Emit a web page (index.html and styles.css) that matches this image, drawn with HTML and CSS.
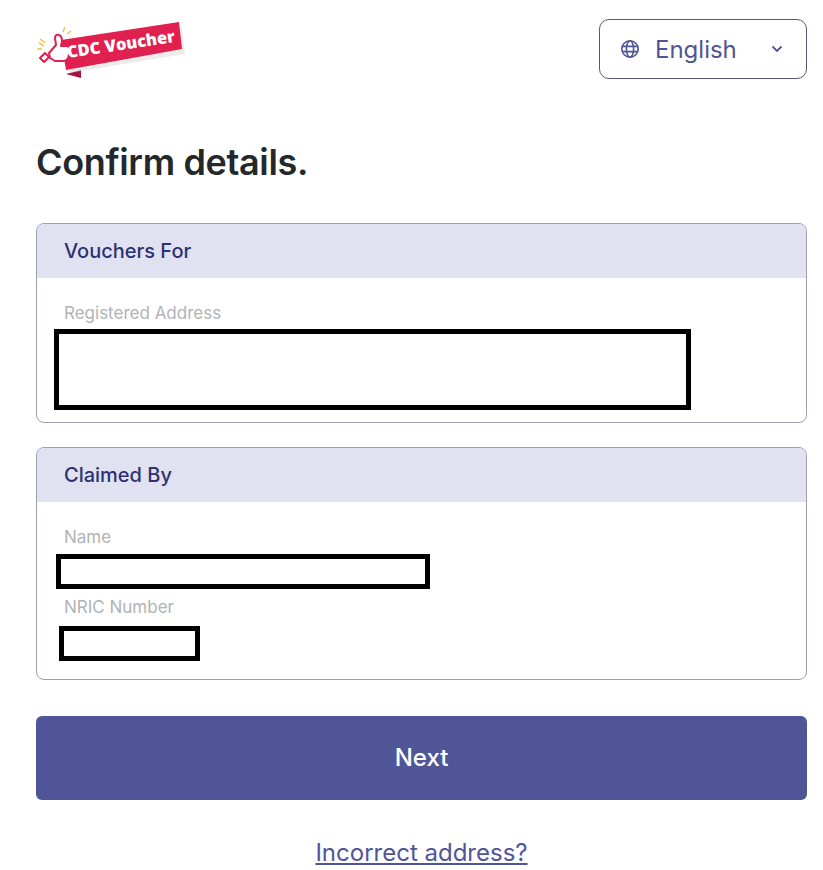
FILE: index.html
```html
<!DOCTYPE html>
<html lang="en">
<head>
    <meta charset="UTF-8">
    <meta name="viewport" content="width=device-width, initial-scale=1.0">
    <title>CDC Voucher</title>
    <link rel="stylesheet" href="styles.css">
</head>
<body>
    <div id="wrapper">
        <div class="topbar">
            <svg class="logo" width="150" height="60" viewBox="0 0 150 60">
                <!-- ribbon -->
                <path d="M30 53 L45 57 L45 49 Z" fill="#a5123c"/>
                <path d="M26 21 L145 4 L148 31 L32 50 Z" fill="#d9d9d9" opacity="0.5" transform="translate(1 2)"/>
                <path d="M25 19 L143 1 L146 28 L30 49 Z" fill="#e0204f"/>
                <!-- thumb -->
                <path d="M4 37 L9 32 L13 36 L8 41 Z" fill="#fff" stroke="#e0204f" stroke-width="2" stroke-linejoin="round"/>
                <path d="M13 32 L20 24 L19 17 Q19 13 23 14 Q26 15 26 20 L25 25 L31 25 Q35 26 34 30 L32 37 Q31 40 27 40 L19 40 L14 37 Z" fill="#fff" stroke="#e0204f" stroke-width="2" stroke-linejoin="round"/>
                <!-- sparks -->
                <path d="M3 22 L8 25 M1 28 L6 28 M4 18 L9 22 M27 11 L29 6 M31 13 L35 10" stroke="#f2c641" stroke-width="1.5" fill="none"/>
                <text class="logo-text" x="0" y="0" transform="translate(32 37) rotate(-8.5)">CDC Voucher</text>
            </svg>
            <div class="lang">
                <svg class="globe" width="20" height="20" viewBox="0 0 20 20" fill="none" stroke="#4f5597" stroke-width="1.6">
                    <circle cx="10" cy="10" r="8.2"/>
                    <ellipse cx="10" cy="10" rx="3.6" ry="8.2"/>
                    <path d="M2.4 7.4 H17.6 M2.4 12.6 H17.6"/>
                </svg>
                <span class="lang-name">English</span>
                <svg class="chev" width="12" height="8" viewBox="0 0 12 8" fill="none" stroke="#4f5597" stroke-width="1.8">
                    <path d="M1.5 1.5 L6 6 L10.5 1.5"/>
                </svg>
            </div>
        </div>

        <h1 class="title">Confirm details.</h1>

        <div class="card card-first">
            <div class="card-head">Vouchers For</div>
            <div class="card-body">
                <div class="label">Registered Address</div>
                <div class="redact redact-address"></div>
            </div>
        </div>

        <div class="card card-second">
            <div class="card-head">Claimed By</div>
            <div class="card-body">
                <div class="label">Name</div>
                <div class="redact redact-name"></div>
                <div class="label label-nric">NRIC Number</div>
                <div class="redact redact-nric"></div>
            </div>
        </div>

        <div class="btn-next">Next</div>
        <a class="link" href="#">Incorrect address?</a>
    </div>
</body>
</html>
```

FILE: styles.css
```css
body{
    margin: 0;
    background-color: #ffffff;
    font-family: Inter, "Liberation Sans", sans-serif;
}

#wrapper{
    width: 771px;
    height: 870px;
    margin-left: 36px;
    overflow: hidden;
}

.topbar{
    display: flex;
    justify-content: space-between;
    align-items: flex-start;
    padding-top: 19px;
    height: 60px;
}

.logo{
    display: block;
    margin-top: 2px;
}

.logo-text{
    font-family: "Open Sans", sans-serif;
    font-size: 16.5px;
    font-weight: 800;
    fill: #ffffff;
}

.lang{
    width: 208px;
    height: 60px;
    box-sizing: border-box;
    border: 1px solid #55587d;
    border-radius: 10px;
    display: flex;
    align-items: center;
    padding: 0 23px 0 20px;
    color: #4f5597;
}

.lang-name{
    font-size: 24px;
    margin-left: 15px;
    flex: 1;
}

.title{
    margin: 61px 0 0;
    font-size: 36px;
    line-height: 44px;
    font-weight: 600;
    color: #25282b;
    letter-spacing: -0.35px;
}

.card{
    border: 1px solid #9c9db0;
    border-radius: 8px;
    overflow: hidden;
    box-sizing: border-box;
}

.card-first{
    margin-top: 39px;
    height: 200px;
}

.card-second{
    margin-top: 24px;
    height: 233px;
}

.card-head{
    height: 54px;
    line-height: 54px;
    padding-left: 27px;
    background-color: #e0e2f1;
    color: #2f326f;
    font-size: 20px;
    font-weight: 500;
}

.card-body{
    padding: 25px 0 0 27px;
}

.label{
    font-size: 17px;
    line-height: 20px;
    color: #b1b3b6;
}

.label-nric{
    margin-top: 8px;
}

.redact{
    box-sizing: border-box;
    border: 5px solid #000000;
}

.redact-address{
    width: 637px;
    height: 81px;
    margin-top: 6px;
    margin-left: -10px;
}

.redact-name{
    width: 374px;
    height: 35px;
    margin-top: 7px;
    margin-left: -8px;
}

.redact-nric{
    width: 141px;
    height: 35px;
    margin-top: 9px;
    margin-left: -5px;
}

.btn-next{
    margin-top: 36px;
    height: 84px;
    line-height: 84px;
    text-align: center;
    background-color: #505597;
    border-radius: 6px;
    color: #ffffff;
    font-size: 24px;
    font-weight: 500;
}

.link{
    display: block;
    margin-top: 38px;
    text-align: center;
    color: #4f5597;
    font-size: 24px;
    line-height: 30px;
}
```
